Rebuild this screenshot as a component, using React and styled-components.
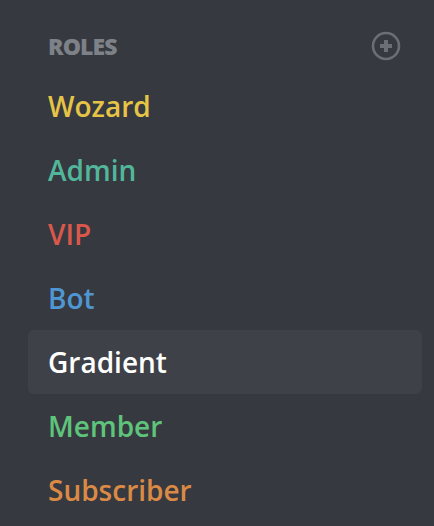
import React from "react";
import styled, { createGlobalStyle } from "styled-components";

const GlobalStyle = createGlobalStyle`
  html, body {
    margin: 0;
    padding: 0;
    background: #36393f;
  }
`;

const Panel = styled.div`
  width: 434px;
  height: 526px;
  background: #36393f;
  font-family: "Open Sans", Lato, sans-serif;
  overflow: hidden;
`;

const Header = styled.div`
  display: flex;
  align-items: center;
  justify-content: space-between;
  height: 36px;
  padding: 28px 33px 0 48px;
  margin-bottom: 10px;
`;

const HeaderTitle = styled.span`
  color: #7d8188;
  font-size: 23px;
  font-weight: 800;
  letter-spacing: -0.9px;
  text-transform: uppercase;
`;

const AddButton = styled.button`
  display: flex;
  align-items: center;
  justify-content: center;
  width: 30px;
  height: 30px;
  padding: 0;
  border: none;
  background: transparent;
  cursor: pointer;
`;

const List = styled.ul`
  list-style: none;
  margin: 0;
  padding: 0 12px 0 28px;
`;

const Role = styled.li`
  display: flex;
  align-items: center;
  height: 64px;
  padding-left: 20px;
  border-radius: 6px;
  background: ${(p) => (p.$active ? "#3e4147" : "transparent")};
  color: ${(p) => p.$color};
  font-size: 28px;
  font-weight: 600;
`;

const roles = [
  { name: "Wozard", color: "#e6c446" },
  { name: "Admin", color: "#52b79a" },
  { name: "VIP", color: "#da584b" },
  { name: "Bot", color: "#4f97d3" },
  { name: "Gradient", color: "#ffffff", active: true },
  { name: "Member", color: "#5fc47b" },
  { name: "Subscriber", color: "#da8a45" },
];

function PlusCircle() {
  return (
    <svg width="30" height="30" viewBox="0 0 30 30">
      <circle cx="15" cy="15" r="13" fill="none" stroke="#6a6e75" strokeWidth="2.6" />
      <path d="M15 9v12M9 15h12" stroke="#6a6e75" strokeWidth="4" />
    </svg>
  );
}

export default function App() {
  return (
    <Panel>
      <GlobalStyle />
      <Header>
        <HeaderTitle>Roles</HeaderTitle>
        <AddButton aria-label="Add role">
          <PlusCircle />
        </AddButton>
      </Header>
      <List>
        {roles.map((r) => (
          <Role key={r.name} $color={r.color} $active={r.active}>
            {r.name}
          </Role>
        ))}
      </List>
    </Panel>
  );
}
